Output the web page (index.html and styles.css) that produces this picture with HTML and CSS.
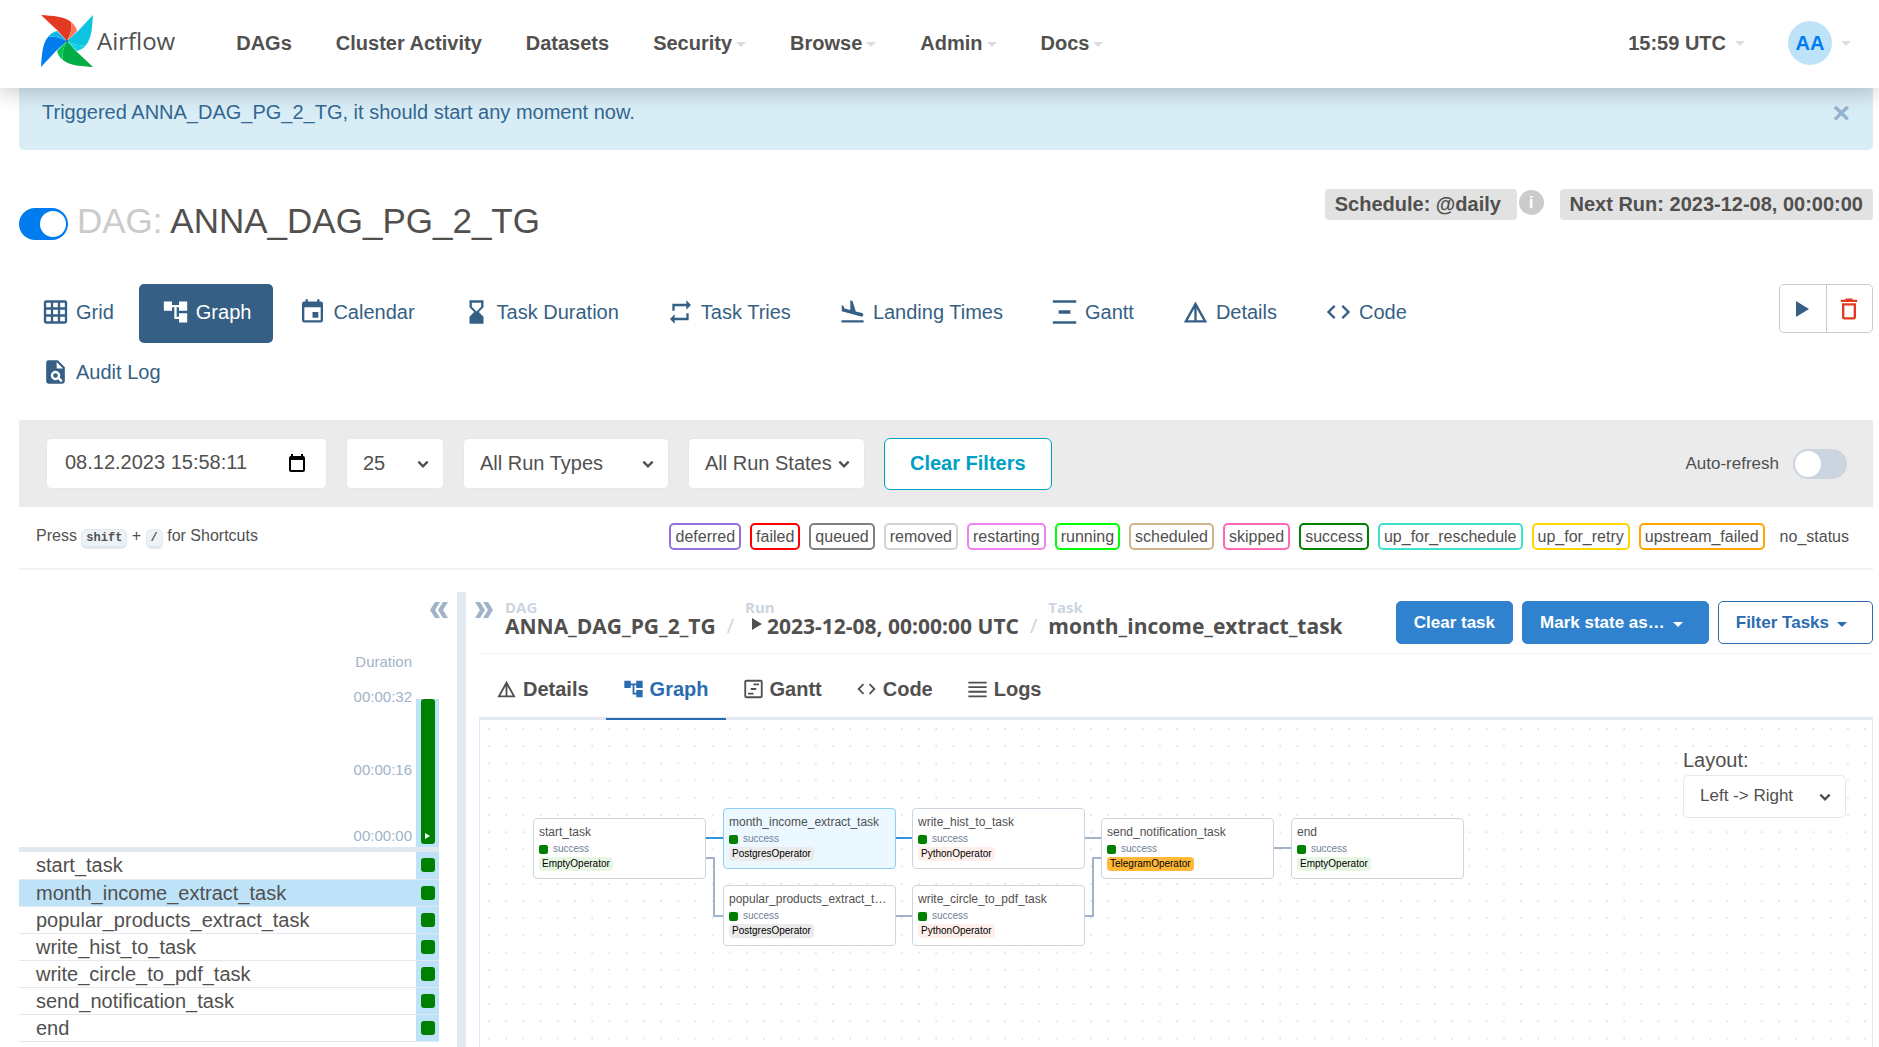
FILE: index.html
```html
<!DOCTYPE html>
<html lang="en">

<head>
    <meta charset="UTF-8">
    <meta name="viewport" content="width=device-width, initial-scale=1.0">
    <title>ANNA_DAG_PG_2_TG - Graph - Airflow</title>
    <link rel="stylesheet" href="styles.css">
</head>

<body>
    <!-- Shared icons -->
    <svg class="sprite" aria-hidden="true">
        <symbol id="i-grid" viewBox="0 0 24 24"><path fill-rule="evenodd" d="M4 2h16a2 2 0 0 1 2 2v16a2 2 0 0 1-2 2H4a2 2 0 0 1-2-2V4a2 2 0 0 1 2-2zm0 2v4h4V4zm6 0v4h4V4zm6 0v4h4V4zM4 10v4h4v-4zm6 0v4h4v-4zm6 0v4h4v-4zM4 16v4h4v-4zm6 0v4h4v-4zm6 0v4h4v-4z"/></symbol>
        <symbol id="i-tree" viewBox="0 0 24 24"><path d="M22 11V3h-7v3H9V3H2v8h7V8h2v10h4v3h7v-8h-7v3h-2V8h2v3z"/></symbol>
        <symbol id="i-calendar" viewBox="0 0 24 24"><path d="M17 12h-5v5h5zM16 1v2H8V1H6v2H5a2 2 0 0 0-2 2v14a2 2 0 0 0 2 2h14a2 2 0 0 0 2-2V5a2 2 0 0 0-2-2h-1V1zm3 18H5V8h14z"/></symbol>
        <symbol id="i-hourglass" viewBox="0 0 24 24"><path d="M6 2v6l4 4-4 4v6h12v-6l-4-4 4-4V2zm10 5.500l-4 4-4-4V4h8z"/></symbol>
        <symbol id="i-repeat" viewBox="0 0 24 24"><path d="M7 7h10v3l4-4-4-4v3H5v6h2zM17 17H7v-3l-4 4 4 4v-3h12v-6h-2z"/></symbol>
        <symbol id="i-land" viewBox="0 0 24 24"><path d="M2.500 19h19v2h-19zm16.840-3.150c.8.210 1.620-.260 1.840-1.060.210-.8-.260-1.620-1.060-1.840l-5.310-1.420-2.760-9.020L10.120 2v8.280L5.150 8.950l-.930-2.320-1.450-.390v5.170l16.570 4.440z"/></symbol>
        <symbol id="i-gantt" viewBox="0 0 24 24"><path d="M2 2h20v2H2zM7 10.500h10v3H7zM2 20h20v2H2z"/></symbol>
        <symbol id="i-details" viewBox="0 0 24 24"><path d="M12 3L2 21h20zm1 5.920L18.600 19H13zm-2 0V19H5.400z"/></symbol>
        <symbol id="i-code" viewBox="0 0 24 24"><path d="M9.400 16.600L4.800 12l4.600-4.600L8 6l-6 6 6 6zm5.200 0l4.600-4.600-4.600-4.600L16 6l6 6-6 6z"/></symbol>
        <symbol id="i-audit" viewBox="0 0 24 24"><path fill-rule="evenodd" d="M6 2h8l6 6v12a2 2 0 0 1-2 2H6a2 2 0 0 1-2-2V4a2 2 0 0 1 2-2zm7 1.500V9h5.500zM12 11a4 4 0 1 0 2.200 7.300l2.500 2.400 1.400-1.400-2.500-2.500A4 4 0 0 0 12 11zm0 2a2 2 0 1 1 0 4 2 2 0 0 1 0-4z"/></symbol>
        <symbol id="i-trash" viewBox="0 0 24 24"><path d="M6 19a2 2 0 0 0 2 2h8a2 2 0 0 0 2-2V7H6zM8 9h8v10H8zm7.500-5l-1-1h-5l-1 1H5v2h14V4z"/></symbol>
        <symbol id="i-chart" viewBox="0 0 24 24"><path fill-rule="evenodd" d="M4 2h16a2 2 0 0 1 2 2v16a2 2 0 0 1-2 2H4a2 2 0 0 1-2-2V4a2 2 0 0 1 2-2zm0 2v16h16V4zm8 2h6v2h-6zM9 11h6v2H9zM6 16h6v2H6z"/></symbol>
        <symbol id="i-logs" viewBox="0 0 24 24"><path d="M2 4h20v2H2zM2 9h20v2H2zM2 14h20v2H2zM2 19h20v2H2z"/></symbol>
        <symbol id="i-chevron" viewBox="0 0 12 12"><path d="M2 4l4 4 4-4" fill="none" stroke="currentColor" stroke-width="2"/></symbol>
        <symbol id="i-double" viewBox="0 0 18 16"><path d="M0 0h5l5 8-5 8H0l5-8zM8 0h5l5 8-5 8H8l5-8z"/></symbol>
    </svg>

    <header class="navbar">
        <a class="brand" href="#">
            <svg width="52" height="52" viewBox="0 0 52 52" aria-hidden="true">
                <defs>
                    <path id="blade" d="M0 0C12 1 23 1 30 7C31 13 30 19 26 26L16 15z"/>
                    <path id="fold" d="M30 7C33 9 35 12 36 16L26 26C30 19 31 13 30 7z"/>
                </defs>
                <g fill="#e43921"><use href="#blade"/><use href="#fold" fill="#ff7557"/></g>
                <g transform="rotate(90 26 26)"><use href="#blade" fill="#0cc4e0"/><use href="#fold" fill="#11d1e6"/></g>
                <g transform="rotate(180 26 26)"><use href="#blade" fill="#00ad46"/><use href="#fold" fill="#04c453"/></g>
                <g transform="rotate(270 26 26)"><use href="#blade" fill="#017cee"/><use href="#fold" fill="#0cb6e6"/></g>
                <circle cx="26" cy="26" r="1" fill="#51504f"/>
            </svg>
            <span>Airflow</span>
        </a>
        <nav class="menu">
            <a href="#">DAGs</a>
            <a href="#">Cluster Activity</a>
            <a href="#">Datasets</a>
            <a href="#">Security<i class="caret"></i></a>
            <a href="#">Browse<i class="caret"></i></a>
            <a href="#">Admin<i class="caret"></i></a>
            <a href="#">Docs<i class="caret"></i></a>
        </nav>
        <div class="user-menu">
            <a href="#">15:59 UTC <i class="caret"></i></a>
            <a href="#"><span class="avatar">AA</span><i class="caret"></i></a>
        </div>
    </header>

    <main class="page">
        <div class="alert">
            <span>Triggered ANNA_DAG_PG_2_TG, it should start any moment now.</span>
            <button class="close" aria-label="Close">×</button>
        </div>

        <div class="dag-header">
            <label class="switch switch-on">
                <input type="checkbox" checked aria-label="Pause or unpause DAG">
                <span class="knob"></span>
            </label>
            <h1><span class="muted">DAG:</span> ANNA_DAG_PG_2_TG</h1>
            <div class="schedule">
                <a class="pill" href="#">Schedule: @daily&nbsp;</a>
                <span class="info">i</span>
                <span class="pill">Next Run: 2023-12-08, 00:00:00</span>
            </div>
        </div>

        <div class="dag-nav">
            <nav class="nav-pills">
                <a href="#"><svg><use href="#i-grid"/></svg>Grid</a>
                <a href="#" class="active"><svg><use href="#i-tree"/></svg>Graph</a>
                <a href="#"><svg><use href="#i-calendar"/></svg>Calendar</a>
                <a href="#"><svg><use href="#i-hourglass"/></svg>Task Duration</a>
                <a href="#"><svg><use href="#i-repeat"/></svg>Task Tries</a>
                <a href="#"><svg><use href="#i-land"/></svg>Landing Times</a>
                <a href="#"><svg><use href="#i-gantt"/></svg>Gantt</a>
                <a href="#"><svg><use href="#i-details"/></svg>Details</a>
                <a href="#"><svg><use href="#i-code"/></svg>Code</a>
                <a href="#"><svg><use href="#i-audit"/></svg>Audit Log</a>
            </nav>
            <div class="dag-actions">
                <button aria-label="Trigger DAG"><svg class="play" viewBox="0 0 13 16"><path d="M0 0l13 8-13 8z"/></svg></button>
                <button aria-label="Delete DAG" class="danger"><svg><use href="#i-trash"/></svg></button>
            </div>
        </div>

        <form class="filters">
            <div class="field date-field">
                <input type="text" value="08.12.2023 15:58:11" aria-label="Base date">
                <svg class="date-icon" viewBox="0 0 16 18"><path fill-rule="evenodd" d="M2 0h2v2h8V0h2v2a2 2 0 0 1 2 2v12a2 2 0 0 1-2 2H2a2 2 0 0 1-2-2V4a2 2 0 0 1 2-2zm0 6v10h12V6z"/></svg>
            </div>
            <div class="field runs-field">
                <select aria-label="Number of runs"><option>25</option></select>
                <svg class="chevron"><use href="#i-chevron"/></svg>
            </div>
            <div class="field types-field">
                <select aria-label="Run types"><option>All Run Types</option></select>
                <svg class="chevron"><use href="#i-chevron"/></svg>
            </div>
            <div class="field states-field">
                <select aria-label="Run states"><option>All Run States</option></select>
                <svg class="chevron"><use href="#i-chevron"/></svg>
            </div>
            <button type="button" class="clear-filters">Clear Filters</button>
            <label class="auto-refresh">Auto-refresh
                <span class="switch">
                    <input type="checkbox">
                    <span class="knob"></span>
                </span>
            </label>
        </form>

        <div class="legend">
            <div class="shortcuts">Press <kbd>shift</kbd> + <kbd>/</kbd> for Shortcuts</div>
            <div class="states">
                <span class="state deferred">deferred</span>
                <span class="state failed">failed</span>
                <span class="state queued">queued</span>
                <span class="state removed">removed</span>
                <span class="state restarting">restarting</span>
                <span class="state running">running</span>
                <span class="state scheduled">scheduled</span>
                <span class="state skipped">skipped</span>
                <span class="state success">success</span>
                <span class="state up-for-reschedule">up_for_reschedule</span>
                <span class="state up-for-retry">up_for_retry</span>
                <span class="state upstream-failed">upstream_failed</span>
                <span class="state no-status">no_status</span>
            </div>
        </div>

        <div class="panels">
            <section class="grid-panel">
                <button class="collapse flip" aria-label="Hide grid"><svg><use href="#i-double"/></svg></button>
                <div class="durations">
                    <div class="axis">
                        <span>Duration</span>
                        <span>00:00:32</span>
                        <span>00:00:16</span>
                        <span>00:00:00</span>
                    </div>
                    <div class="run-column">
                        <div class="run-bar"><svg viewBox="0 0 5 6"><path d="M0 0l5 3-5 3z"/></svg></div>
                    </div>
                </div>
                <table class="tasks">
                    <tr><td>start_task</td><td class="cell"><i></i></td></tr>
                    <tr class="selected"><td>month_income_extract_task</td><td class="cell"><i></i></td></tr>
                    <tr><td>popular_products_extract_task</td><td class="cell"><i></i></td></tr>
                    <tr><td>write_hist_to_task</td><td class="cell"><i></i></td></tr>
                    <tr><td>write_circle_to_pdf_task</td><td class="cell"><i></i></td></tr>
                    <tr><td>send_notification_task</td><td class="cell"><i></i></td></tr>
                    <tr><td>end</td><td class="cell"><i></i></td></tr>
                </table>
            </section>

            <div class="divider"></div>

            <section class="details-panel">
                <div class="details-header">
                    <button class="collapse" aria-label="Hide details"><svg><use href="#i-double"/></svg></button>
                    <div class="breadcrumb">
                        <div class="crumb"><small>DAG</small><a href="#">ANNA_DAG_PG_2_TG</a></div>
                        <span class="slash">/</span>
                        <div class="crumb"><small>Run</small><a href="#"><svg class="run-type" viewBox="0 0 10 12"><path d="M0 0l10 6-10 6z"/></svg>2023-12-08, 00:00:00 UTC</a></div>
                        <span class="slash">/</span>
                        <div class="crumb"><small>Task</small><a href="#">month_income_extract_task</a></div>
                    </div>
                    <div class="task-actions">
                        <button class="primary">Clear task</button>
                        <button class="primary">Mark state as…<i class="caret"></i></button>
                        <button class="outline">Filter Tasks<i class="caret"></i></button>
                    </div>
                </div>

                <nav class="tabs">
                    <a href="#"><svg><use href="#i-details"/></svg>Details</a>
                    <a href="#" class="active"><svg><use href="#i-tree"/></svg>Graph</a>
                    <a href="#"><svg><use href="#i-chart"/></svg>Gantt</a>
                    <a href="#"><svg><use href="#i-code"/></svg>Code</a>
                    <a href="#"><svg><use href="#i-logs"/></svg>Logs</a>
                </nav>

                <div class="canvas">
                    <svg class="edges" aria-hidden="true">
                        <defs>
                            <pattern id="dots" x="8" y="8" width="17.200" height="17.200" patternUnits="userSpaceOnUse">
                                <circle cx="1" cy="1" r="0.700" fill="#b8bcc2"/>
                            </pattern>
                        </defs>
                        <rect width="100%" height="100%" fill="url(#dots)"/>
                        <path class="edge edge-active" d="M225 118h19M415 118h18"/>
                        <path class="edge" d="M225 138h9v58h10M415 196h18M604 118h18M604 196h9v-58h9M794 128h18"/>
                    </svg>
                    <div class="node start"><b>start_task</b><span class="status">success</span><em class="empty">EmptyOperator</em></div>
                    <div class="node month current"><b>month_income_extract_task</b><span class="status">success</span><em class="postgres">PostgresOperator</em></div>
                    <div class="node popular"><b>popular_products_extract_task</b><span class="status">success</span><em class="postgres">PostgresOperator</em></div>
                    <div class="node hist"><b>write_hist_to_task</b><span class="status">success</span><em class="python">PythonOperator</em></div>
                    <div class="node circle"><b>write_circle_to_pdf_task</b><span class="status">success</span><em class="python">PythonOperator</em></div>
                    <div class="node send"><b>send_notification_task</b><span class="status">success</span><em class="telegram">TelegramOperator</em></div>
                    <div class="node end"><b>end</b><span class="status">success</span><em class="empty">EmptyOperator</em></div>

                    <div class="layout">
                        <label for="layout">Layout:</label>
                        <div class="field">
                            <select id="layout"><option>Left -&gt; Right</option></select>
                            <svg class="chevron"><use href="#i-chevron"/></svg>
                        </div>
                    </div>
                </div>
            </section>
        </div>
    </main>
</body>

</html>
```
FILE: styles.css
```css
* {
    box-sizing: border-box;
}

body {
    display: flex;
    flex-direction: column;
    height: 100vh;
    margin: 0;
    overflow: hidden;
    font-family: "Liberation Sans", Arial, sans-serif;
    font-size: 20px;
    line-height: 28px;
    color: #51504f;
    background: #fff;
}

a {
    color: inherit;
    text-decoration: none;
}

button,
input,
select {
    font: inherit;
    color: inherit;
}

button {
    padding: 0;
    border: none;
    background: none;
    cursor: pointer;
}

svg {
    flex: none;
    fill: currentColor;
}

.sprite {
    position: absolute;
    width: 0;
    height: 0;
}

.caret {
    display: inline-block;
    border: 5px solid transparent;
    border-top-color: #dcdce2;
    border-bottom: none;
}

/* Navbar */
.navbar {
    position: relative;
    z-index: 2;
    flex: none;
    display: flex;
    align-items: center;
    height: 88px;
    padding: 0 28px 2px 41px;
    background: #fff;
    box-shadow: 0 5px 20px rgba(0, 0, 0, 0.2);
    font-weight: bold;
}

.brand {
    display: flex;
    align-items: center;
    gap: 4px;
    height: 82px;
    align-self: flex-start;
    font-family: "Open Sans", "Noto Sans", sans-serif;
    font-size: 24px;
    font-weight: normal;
}

.menu {
    display: flex;
    gap: 44px;
    margin-left: 61px;
}

.menu .caret {
    margin-left: 4px;
    vertical-align: 3px;
}

.user-menu {
    display: flex;
    gap: 43px;
    margin-left: auto;
}

.user-menu a {
    display: flex;
    align-items: center;
    gap: 9px;
}

.avatar {
    width: 44px;
    height: 44px;
    border-radius: 50%;
    background: #bee3f8;
    color: #017cee;
    line-height: 44px;
    text-align: center;
}

/* Page */
.page {
    flex: 1;
    min-height: 0;
    display: flex;
    flex-direction: column;
    padding: 0 6px 0 19px;
}

.alert {
    display: flex;
    justify-content: space-between;
    align-items: flex-start;
    height: 62px;
    padding: 10px 23px;
    border-radius: 0 0 5px 5px;
    background: #d9edf7;
    color: #336791;
}

.close {
    padding-top: 1px;
    font-size: 30px;
    font-weight: bold;
    color: #95b3cd;
}

.dag-header {
    display: flex;
    align-items: flex-start;
    padding-top: 39px;
}

.switch {
    display: inline-flex;
    align-items: center;
    width: 54px;
    height: 30px;
    padding: 2px;
    border-radius: 15px;
    background: #cbd5e0;
}

.switch input {
    position: absolute;
    opacity: 0;
}

.knob {
    width: 26px;
    height: 26px;
    border-radius: 50%;
    background: #fff;
}

.switch-on {
    justify-content: flex-end;
    width: 49px;
    height: 32px;
    margin-top: 19px;
    border-radius: 16px;
    background: #017cee;
}

.dag-header h1 {
    margin: 12px 0 0 9px;
    font-size: 35px;
    font-weight: normal;
    line-height: 40px;
}

.muted {
    color: #cbcbcb;
}

.schedule {
    display: flex;
    align-items: flex-start;
    margin-left: auto;
    font-weight: bold;
}

.pill {
    padding: 1px 10px 2px;
    border-radius: 4px;
    background: #e2e2e2;
}

.info {
    width: 25px;
    height: 25px;
    margin: 1px 16px 0 2px;
    border-radius: 50%;
    background: #cbcbcb;
    color: #fff;
    font-size: 17px;
    line-height: 25px;
    text-align: center;
}

.dag-nav {
    display: grid;
    grid-template-columns: 10fr 2fr;
    margin-top: 43px;
}

.nav-pills {
    display: flex;
    flex-wrap: wrap;
    gap: 1px 3px;
    color: #355f84;
}

.nav-pills a {
    display: flex;
    align-items: center;
    gap: 6px;
    padding: 14px 22px 17px;
    border-radius: 5px;
}

.nav-pills svg {
    width: 29px;
    height: 28px;
}

.nav-pills .active {
    background: #355f84;
    color: #fff;
}

.dag-actions {
    display: flex;
    justify-self: end;
    width: 94px;
    height: 49px;
    border: 1px solid #cbcbcb;
    border-radius: 5px;
    color: #355f84;
}

.dag-actions button {
    flex: 1;
    display: flex;
    align-items: center;
    justify-content: center;
}

.dag-actions .danger {
    border-left: 1px solid #cbcbcb;
    color: #e43921;
}

.dag-actions .danger svg {
    width: 28px;
    height: 28px;
}

.dag-actions .play {
    width: 13px;
    height: 16px;
}

/* Filters */
.filters {
    display: flex;
    align-items: center;
    gap: 19px;
    height: 87px;
    margin-top: 17px;
    padding: 0 26px 0 27px;
    background: #ebebeb;
}

.field {
    position: relative;
}

.field input,
.field select {
    width: 100%;
    height: 51px;
    padding: 0 16px 2px;
    border: 1px solid #e2e8f0;
    border-radius: 5px;
    background: #fff;
    appearance: none;
}

.field input {
    padding-left: 18px;
}

.date-field {
    width: 281px;
}

.runs-field {
    width: 98px;
}

.types-field {
    width: 206px;
}

.states-field {
    width: 177px;
}

.chevron {
    position: absolute;
    right: 14px;
    top: 50%;
    width: 14px;
    height: 14px;
    margin-top: -7px;
    pointer-events: none;
}

.date-icon {
    position: absolute;
    right: 22px;
    top: 16px;
    width: 16px;
    height: 18px;
    color: #000;
}

.clear-filters {
    height: 52px;
    padding: 0 25px 2px;
    border: 1px solid #00a0c6;
    border-radius: 6px;
    background: #fff;
    color: #00a0c6;
    font-weight: bold;
}

.auto-refresh {
    display: flex;
    align-items: center;
    gap: 14px;
    margin-left: auto;
    font-size: 17px;
}

/* Legend */
.legend {
    display: flex;
    justify-content: space-between;
    align-items: center;
    height: 63px;
    padding: 0 18px 2px 17px;
    border-bottom: 2px solid #edf2f7;
    font-size: 16px;
    line-height: 23px;
}

kbd {
    padding: 1px 4px;
    border: 1px solid #e2e8f0;
    border-bottom-width: 3px;
    border-radius: 6px;
    background: #edf2f7;
    font-family: "Liberation Mono", monospace;
    font-size: 12px;
    font-weight: bold;
}

.states {
    display: flex;
    gap: 9px;
}

.state {
    padding: 0 4px;
    border: 2px solid transparent;
    border-radius: 5px;
}

.deferred { border-color: mediumpurple; }
.failed { border-color: red; }
.queued { border-color: gray; }
.removed { border-color: lightgrey; }
.restarting { border-color: violet; }
.running { border-color: lime; }
.scheduled { border-color: tan; }
.skipped { border-color: hotpink; }
.success { border-color: green; }
.up-for-reschedule { border-color: turquoise; }
.up-for-retry { border-color: gold; }
.upstream-failed { border-color: orange; }

/* Grid panel */
.panels {
    flex: 1;
    min-height: 0;
    display: flex;
    padding-top: 22px;
}

.grid-panel {
    flex: none;
    width: 420px;
}

.collapse {
    display: block;
    color: #a0b3c8;
}

.collapse svg {
    display: block;
    width: 18px;
    height: 16px;
}

.flip {
    margin: 10px -9px 0 auto;
    transform: scaleX(-1);
}

.durations {
    display: flex;
    justify-content: flex-end;
    align-items: flex-end;
    gap: 4px;
    height: 234px;
    border-bottom: 5px solid #e2e8f0;
}

.axis {
    display: grid;
    grid-template-rows: 35px 73px 66px 22px;
    height: 195px;
    color: #a0b3c8;
    font-size: 15px;
    line-height: 20px;
    text-align: right;
}

.run-column {
    width: 23px;
    height: 148px;
    background: #bee3f8;
}

.run-bar {
    display: flex;
    justify-content: center;
    align-items: flex-end;
    width: 14px;
    height: 145px;
    margin: 0 auto;
    padding-bottom: 5px;
    border-radius: 3px;
    background: green;
    color: #fff;
}

.run-bar svg {
    width: 5px;
    height: 6px;
}

.tasks {
    width: 100%;
    border-collapse: collapse;
}

.tasks td {
    height: 27px;
    padding: 0 0 0 17px;
    border-bottom: 1px solid #e2e8f0;
    line-height: 26px;
}

.tasks .cell {
    width: 23px;
    padding: 0;
    background: #bee3f8;
}

.cell i {
    display: block;
    width: 14px;
    height: 14px;
    margin: 0 auto;
    border-radius: 3px;
    background: green;
}

.selected {
    background: #bee3f8;
}

.divider {
    flex: none;
    width: 9px;
    margin-left: 18px;
    background: #e2e8f0;
}

/* Details panel */
.details-panel {
    flex: 1;
    min-width: 0;
    display: flex;
    flex-direction: column;
    margin-left: 13px;
}

.details-header {
    display: flex;
    align-items: flex-start;
    height: 62px;
    padding-top: 9px;
    border-bottom: 1px solid #edf2f7;
}

.details-header .collapse {
    margin: 1px 12px 0 -4px;
}

.breadcrumb {
    display: flex;
    align-items: flex-end;
    font-family: "Open Sans", "Noto Sans", sans-serif;
    font-weight: bold;
}

.crumb {
    display: flex;
    flex-direction: column;
    font-size: 21px;
    line-height: 25px;
}

.crumb small {
    color: #cbd5e0;
    font-size: 15px;
    line-height: 13px;
}

.slash {
    margin: 0 11px;
    color: #cbd5e0;
    font-weight: normal;
    line-height: 26px;
}

.run-type {
    width: 10px;
    height: 12px;
    margin: 0 5px 0 7px;
    vertical-align: 4px;
}

.task-actions {
    display: flex;
    gap: 9px;
    margin-left: auto;
    font-size: 17px;
    font-weight: bold;
}

.task-actions button {
    height: 43px;
    padding: 0 17px;
    border: 1px solid #3182ce;
    border-radius: 5px;
}

.task-actions .primary {
    background: #3182ce;
    color: #fff;
}

.task-actions .outline {
    border-color: #2b6cb0;
    color: #2b6cb0;
}

.task-actions .caret {
    margin: 0 8px;
    border-top-color: currentColor;
    vertical-align: 1px;
}

.tabs {
    display: flex;
    height: 66px;
    border-bottom: 3px solid #e2e8f0;
    font-weight: bold;
}

.tabs a {
    display: flex;
    align-items: center;
    gap: 5px;
    height: 66px;
    padding: 6px 17px 0 16px;
    border-bottom: 2px solid transparent;
}

.tabs svg {
    width: 23px;
    height: 22px;
}

.tabs .active {
    border-color: #2b6cb0;
    color: #2b6cb0;
}

/* Graph */
.canvas {
    position: relative;
    flex: 1;
    overflow: hidden;
    border: 1px solid #e2e8f0;
    border-width: 0 1px;
}

.edges {
    position: absolute;
    width: 100%;
    height: 100%;
}

.edge {
    fill: none;
    stroke: #a0b3c8;
    stroke-width: 2;
}

.edge-active {
    stroke: #3196dd;
    stroke-width: 2;
}

.node {
    position: absolute;
    display: flex;
    flex-direction: column;
    align-items: flex-start;
    width: 173px;
    height: 61px;
    padding: 5px;
    border: 1px solid #cbd5e0;
    border-radius: 4px;
    background: #fff;
    font-size: 10px;
    line-height: 14px;
}

.node b {
    max-width: 100%;
    overflow: hidden;
    font-size: 12px;
    font-weight: normal;
    line-height: 16px;
    text-overflow: ellipsis;
    white-space: nowrap;
}

.node em {
    margin-top: 1px;
    padding: 0 3px;
    border-radius: 4px;
    color: #000;
    font-style: normal;
}

.status {
    display: flex;
    align-items: center;
    gap: 5px;
    margin-top: 2px;
    color: #718096;
}

.status::before {
    content: "";
    width: 9px;
    height: 9px;
    border-radius: 2px;
    background: green;
}

.start { left: 53px; top: 98px; }
.month { left: 243px; top: 88px; }
.popular { left: 243px; top: 165px; }
.hist { left: 432px; top: 88px; }
.circle { left: 432px; top: 165px; }
.send { left: 621px; top: 98px; }
.end { left: 811px; top: 98px; }

.current {
    border-color: #90cdf4;
    background: #ebf8ff;
}

.empty { background: #e8f7e4; }
.postgres { background: #ebebeb; }
.python { background: #ffefeb; }
.telegram { background: #ffb838; }

.layout {
    position: absolute;
    top: 26px;
    right: 26px;
    width: 163px;
}

.layout label {
    display: block;
    line-height: 29px;
}

.layout select {
    height: 43px;
    font-size: 17px;
}
```
